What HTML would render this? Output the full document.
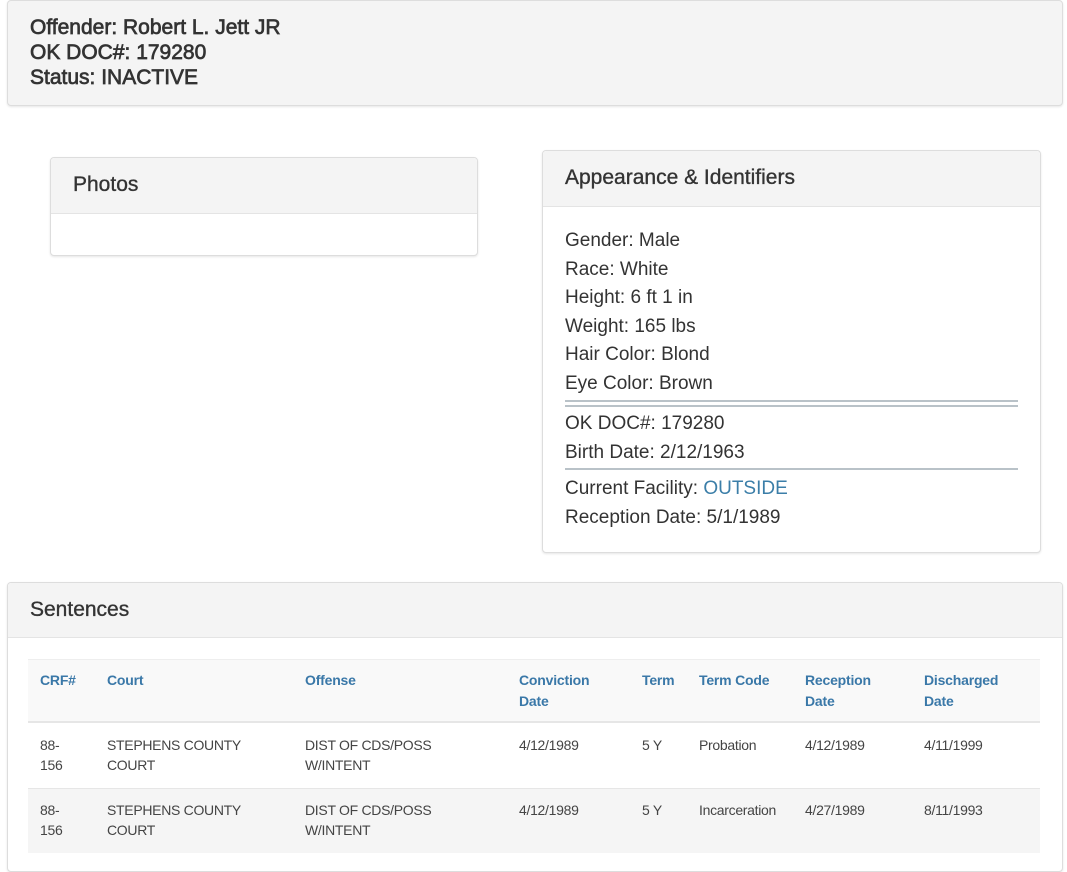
<!DOCTYPE html>
<html><head><style>
body{margin:0;width:1067px;height:856px;background:#fff;font-family:"Liberation Sans",sans-serif;color:#333;position:relative;overflow:hidden}
.a{position:absolute}
.p{position:absolute;border:1px solid #ddd;border-radius:4px;box-shadow:0 1px 2px rgba(0,0,0,.1);background:#fff;box-sizing:border-box}
.h{position:absolute;left:0;right:0;top:0;background:#f4f4f4;border-bottom:1px solid #e4e4e4;border-radius:4px 4px 0 0}
.t{position:absolute;font-size:21px;-webkit-text-stroke:.35px #333;white-space:nowrap}
.l{position:absolute;left:22px;font-size:19px;white-space:nowrap;line-height:22px}
.th{position:absolute;font-size:14px;font-weight:bold;color:#3a78a8;line-height:21px;letter-spacing:-.2px}
.td{position:absolute;font-size:14px;line-height:20px;color:#444;white-space:nowrap;letter-spacing:-.3px}
</style></head><body>
<div class="p" style="left:7px;top:0;width:1056px;height:106px;background:#f4f4f4"></div>
<div class="t" style="left:30px;top:15px;line-height:25px;-webkit-text-stroke:.7px #333">Offender: Robert L. Jett JR<br>OK DOC#: 179280<br>Status: INACTIVE</div>

<div class="p" style="left:50px;top:157px;width:428px;height:99px"><div class="h" style="height:55px"></div><div class="t" style="left:22px;top:15px">Photos</div></div>

<div class="p" style="left:542px;top:150px;width:499px;height:403px"><div class="h" style="height:55px"></div><div class="t" style="left:22px;top:15px">Appearance &amp; Identifiers</div>
<div class="l" style="top:79px">Gender: Male</div>
<div class="l" style="top:108px">Race: White</div>
<div class="l" style="top:136px">Height: 6 ft 1 in</div>
<div class="l" style="top:165px">Weight: 165 lbs</div>
<div class="l" style="top:193px">Hair Color: Blond</div>
<div class="l" style="top:222px">Eye Color: Brown</div>
<div class="a" style="left:22px;width:453px;top:249px;height:2px;background:#b9c2c8"></div>
<div class="a" style="left:22px;width:453px;top:254px;height:2px;background:#b9c2c8"></div>
<div class="l" style="top:262px">OK DOC#: 179280</div>
<div class="l" style="top:291px">Birth Date: 2/12/1963</div>
<div class="a" style="left:22px;width:453px;top:317px;height:2px;background:#b9c2c8"></div>
<div class="l" style="top:327px">Current Facility: <span style="color:#3b7ea8">OUTSIDE</span></div>
<div class="l" style="top:356px">Reception Date: 5/1/1989</div>
</div>

<div class="p" style="left:7px;top:582px;width:1056px;height:290px"><div class="h" style="height:54px"></div><div class="t" style="left:22px;top:15px">Sentences</div></div>
<div class="a" style="left:28px;top:659px;width:1012px;height:64px;background:#f9f9f9;border-top:1px solid #eee;border-bottom:2px solid #e6e6e6;box-sizing:border-box"></div>
<div class="a" style="left:28px;top:788px;width:1012px;height:64px;background:#f5f5f5;border-top:1px solid #e6e6e6"></div>
<div class="th" style="left:40px;top:670px">CRF#</div>
<div class="th" style="left:107px;top:670px">Court</div>
<div class="th" style="left:305px;top:670px">Offense</div>
<div class="th" style="left:519px;top:670px">Conviction<br>Date</div>
<div class="th" style="left:642px;top:670px">Term</div>
<div class="th" style="left:699px;top:670px">Term Code</div>
<div class="th" style="left:805px;top:670px">Reception<br>Date</div>
<div class="th" style="left:924px;top:670px">Discharged<br>Date</div>

<div class="td" style="left:40px;top:735px">88-<br>156</div>
<div class="td" style="left:107px;top:735px">STEPHENS COUNTY<br>COURT</div>
<div class="td" style="left:305px;top:735px">DIST OF CDS/POSS<br>W/INTENT</div>
<div class="td" style="left:519px;top:735px">4/12/1989</div>
<div class="td" style="left:642px;top:735px">5 Y</div>
<div class="td" style="left:699px;top:735px">Probation</div>
<div class="td" style="left:805px;top:735px">4/12/1989</div>
<div class="td" style="left:924px;top:735px">4/11/1999</div>

<div class="td" style="left:40px;top:800px">88-<br>156</div>
<div class="td" style="left:107px;top:800px">STEPHENS COUNTY<br>COURT</div>
<div class="td" style="left:305px;top:800px">DIST OF CDS/POSS<br>W/INTENT</div>
<div class="td" style="left:519px;top:800px">4/12/1989</div>
<div class="td" style="left:642px;top:800px">5 Y</div>
<div class="td" style="left:699px;top:800px">Incarceration</div>
<div class="td" style="left:805px;top:800px">4/27/1989</div>
<div class="td" style="left:924px;top:800px">8/11/1993</div>
</body></html>
